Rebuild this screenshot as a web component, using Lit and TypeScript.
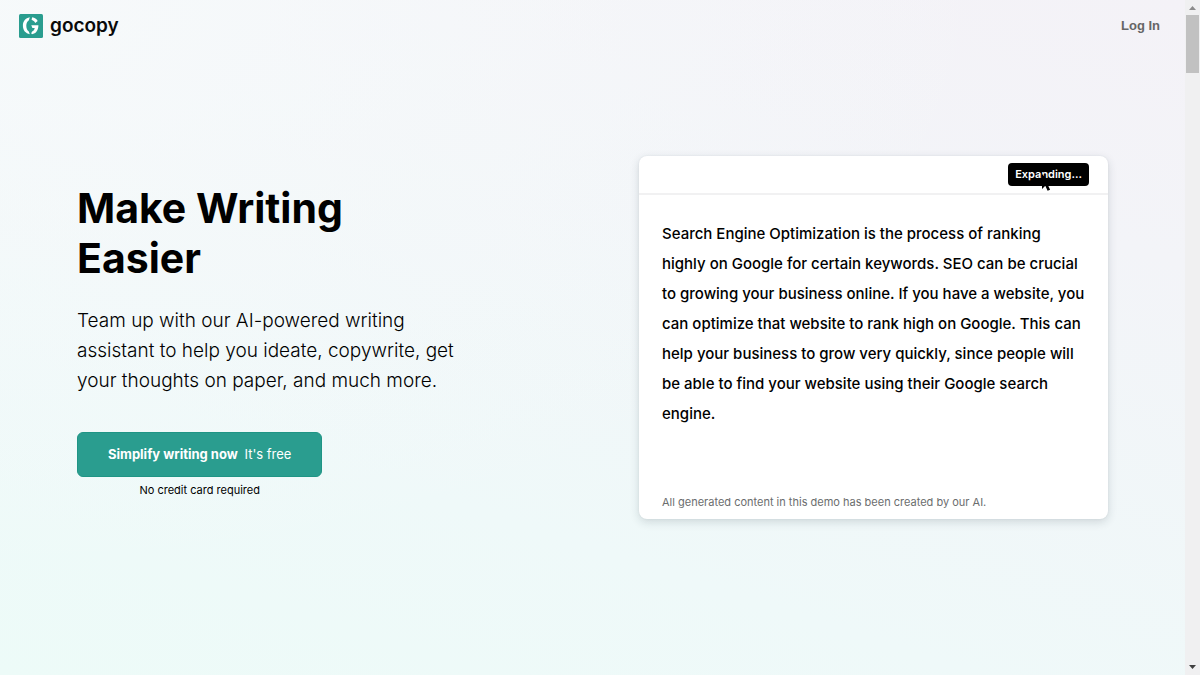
import { LitElement, html, css } from "lit";
import { customElement } from "lit/decorators.js";

@customElement("go-logo")
class GoLogo extends LitElement {
  static styles = css`
    :host { display: inline-flex; }
    .mark { display: block; width: 24px; height: 24px; }
  `;
  render() {
    return html`
      <svg class="mark" viewBox="0 0 24 24" aria-hidden="true">
        <rect width="24" height="24" rx="1.5" fill="#2a9d8f" />
        <g fill="#fff">
          <path d="M10.800 3.300L9.900 6.200C8.200 7.200 7.300 9.200 7.300 11.800s.9 4.700 2.500 5.700l1 2.700C6.600 19.500 3.900 16.300 3.900 11.800s2.700-7.800 6.900-8.500z" />
          <path d="M13.300 3.300c2.300.3 4.300 1.600 5.400 3.600l-2.500 2.100c-.6-1.300-1.500-2.200-2.800-2.700l-.9-.9z" />
          <path d="M12.300 11.200h7.100c0 4.900-2.300 8.300-6.400 9l-.8-.9.900-1.900c1.400-.6 2.300-1.800 2.600-3.500h-2.300z" />
        </g>
      </svg>
    `;
  }
}

@customElement("demo-card")
class DemoCard extends LitElement {
  static styles = css`
    :host {
      display: flex;
      flex-direction: column;
      background: #fff;
      border-radius: 8px;
      box-shadow: 0 3px 10px rgba(30, 50, 60, 0.16), 0 0 2px rgba(30, 50, 60, 0.08);
    }
    .toolbar {
      display: flex;
      justify-content: flex-end;
      padding: 7px 19px;
      border-bottom: 2px solid #f1f1f2;
    }
    .action {
      position: relative;
      padding: 0 7px;
      border: 0;
      border-radius: 4px;
      background: #000;
      color: #fff;
      font: 600 11px/23px "Inter", sans-serif;
    }
    .pointer {
      position: absolute;
      left: 33px;
      top: 10px;
      width: 12px;
      height: 19px;
    }
    .copy {
      margin: 0;
      padding: 24px 23px 64px;
      font-size: 15px;
      font-weight: 500;
      line-height: 30px;
    }
    .note {
      margin: 0;
      padding: 0 23px 8px;
      color: #6b6d6e;
      font-size: 11px;
      line-height: 18px;
    }
  `;
  render() {
    return html`
      <div class="toolbar">
        <button class="action" type="button">
          Expanding...
          <svg class="pointer" viewBox="0 0 12 19" aria-hidden="true">
            <path d="M1 1v15l3.300-3.200 2.300 5 2.500-1.100-2.300-4.900H11z" />
          </svg>
        </button>
      </div>
      <p class="copy">
        Search Engine Optimization is the process of ranking highly on Google for certain
        keywords. SEO can be crucial to growing your business online. If you have a website,
        you can optimize that website to rank high on Google. This can help your business to
        grow very quickly, since people will be able to find your website using their Google
        search engine.
      </p>
      <p class="note">All generated content in this demo has been created by our AI.</p>
    `;
  }
}

@customElement("scroll-rail")
class ScrollRail extends LitElement {
  static styles = css`
    :host {
      display: flex;
      flex-direction: column;
      align-items: center;
      justify-content: space-between;
      width: 15px;
      background: #f0f0f1;
    }
    .top { display: flex; flex-direction: column; align-items: center; }
    .arrow { display: block; width: 15px; height: 15px; }
    .thumb { width: 13px; height: 58px; background: #c1c1c1; }
  `;
  render() {
    return html`
      <div class="top">
        <svg class="arrow" viewBox="0 0 15 15"><path d="M4 10l3.500-4 3.500 4z" fill="#8b8b8b" /></svg>
        <div class="thumb"></div>
      </div>
      <svg class="arrow" viewBox="0 0 15 15"><path d="M4 5h7l-3.500 4z" fill="#404040" /></svg>
    `;
  }
}

@customElement("app-root")
class AppRoot extends LitElement {
  static styles = css`
    :host {
      display: flex;
      min-height: 100vh;
      color: #000;
      font-family: "Inter", sans-serif;
    }
    .page {
      flex: 1;
      display: flex;
      flex-direction: column;
      background:
        radial-gradient(ellipse at 0% 0%, rgba(247, 250, 251, 0.9), rgba(247, 250, 251, 0) 60%),
        linear-gradient(18deg, #edfbf8 0%, #eff9f9 30%, #f3f4f8 75%, #f4f2f7 100%);
    }
    .header {
      display: flex;
      align-items: center;
      justify-content: space-between;
      height: 51px;
      padding: 0 25px 0 19px;
    }
    .brand {
      display: flex;
      align-items: center;
      gap: 7px;
      color: #0a0a0a;
      font-size: 19px;
      font-weight: 600;
      line-height: 24px;
      text-decoration: none;
    }
    .login {
      color: #666;
      font: bold 13px/20px "Liberation Sans", sans-serif;
      text-decoration: none;
    }
    .hero {
      flex: 1;
      display: grid;
      grid-template-columns: 1fr 1fr;
      gap: 93px;
      align-items: center;
      padding: 0 77px 51px;
    }
    .pitch {
      display: flex;
      flex-direction: column;
      align-items: flex-start;
      max-width: 390px;
      padding-top: 6px;
    }
    .title {
      margin: 0 0 23px;
      font-size: 41px;
      font-weight: 700;
      line-height: 50px;
    }
    .lead {
      margin: 0 0 36px;
      font-size: 19px;
      font-weight: 300;
      line-height: 30px;
    }
    .signup { display: flex; flex-direction: column; gap: 4px; }
    .cta {
      padding: 0 30px;
      border: 1px solid #1f9585;
      border-radius: 6px;
      background: #2a9d8f;
      color: #fff;
      font: 400 13px/43px "Inter", sans-serif;
    }
    .strong { margin-right: 3px; font-weight: 700; }
    .hint { font-size: 11px; line-height: 18px; text-align: center; }
  `;
  render() {
    return html`
      <div class="page">
        <header class="header">
          <a class="brand" href="#"><go-logo></go-logo>gocopy</a>
          <a class="login" href="#login">Log In</a>
        </header>
        <main class="hero">
          <section class="pitch">
            <h1 class="title">Make Writing Easier</h1>
            <p class="lead">
              Team up with our AI-powered writing assistant to help you ideate, copywrite, get
              your thoughts on paper, and much more.
            </p>
            <div class="signup">
              <button class="cta" type="button">
                <span class="strong">Simplify writing now</span> It's free
              </button>
              <div class="hint">No credit card required</div>
            </div>
          </section>
          <demo-card></demo-card>
        </main>
      </div>
      <scroll-rail aria-hidden="true"></scroll-rail>
    `;
  }
}
